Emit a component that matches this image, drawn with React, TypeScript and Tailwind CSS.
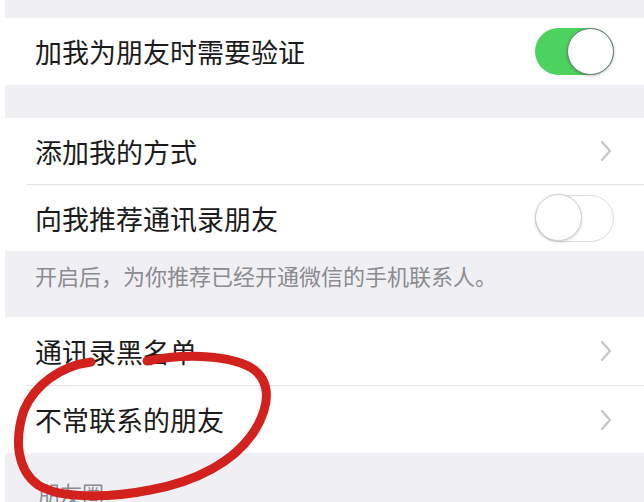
import React from "react";

const font = { fontFamily: '"Noto Sans CJK SC", "Noto Sans", sans-serif' };

function Chevron() {
  return (
    <svg width="12" height="22" viewBox="0 0 12 22" className="shrink-0">
      <path d="M2 2 L10 11 L2 20" fill="none" stroke="#c4c4c9" strokeWidth="2.2" strokeLinecap="round" strokeLinejoin="round" />
    </svg>
  );
}

function Toggle({ on }: { on: boolean }) {
  return on ? (
    <div className="relative w-[79px] h-[47px] rounded-full bg-[#4cd35f] shrink-0">
      <div className="absolute right-0 top-0 w-[47px] h-[47px] rounded-full bg-white border-[1.5px] border-[#6f7a70] shadow-[0_1px_3px_rgba(0,0,0,0.25)]" />
    </div>
  ) : (
    <div className="relative w-[79px] h-[47px] rounded-full bg-white border-[1.5px] border-[#dcdcdc] shrink-0">
      <div className="absolute left-[-1.5px] top-[-1.5px] w-[47px] h-[47px] rounded-full bg-white border-[1.5px] border-[#cfcfcf] shadow-[0_1px_3px_rgba(0,0,0,0.18)]" />
    </div>
  );
}

function Row({ label, h, right }: { label: string; h: string; right: React.ReactNode }) {
  return (
    <div className={`flex items-center justify-between bg-white pl-[30px] pr-[30px] ${h}`}>
      <span className="text-[27px] leading-none text-[#1b1b1b]">{label}</span>
      {right}
    </div>
  );
}

export default function App() {
  return (
    <div className="relative w-[644px] h-[502px] overflow-hidden bg-[#f0f0f4] border-l-[5px] border-white" style={font}>
      <div className="h-[18px]" />
      <Row label="加我为朋友时需要验证" h="h-[67px]" right={<Toggle on />} />
      <div className="h-[33px]" />
      <div className="bg-white">
        <Row label="添加我的方式" h="h-[66px]" right={<div className="pr-[2px]"><Chevron /></div>} />
        <div className="ml-[22px] h-px bg-[#e4e4e8]" />
        <Row label="向我推荐通讯录朋友" h="h-[66px]" right={<Toggle on={false} />} />
      </div>
      <div className="h-[66px] pl-[30px] pt-[13px]">
        <span className="text-[22px] leading-none text-[#8b8b90]">开启后，为你推荐已经开通微信的手机联系人。</span>
      </div>
      <div className="bg-white">
        <Row label="通讯录黑名单" h="h-[68px]" right={<div className="pr-[2px]"><Chevron /></div>} />
        <div className="ml-[22px] h-px bg-[#e4e4e8]" />
        <Row label="不常联系的朋友" h="h-[67px]" right={<div className="pr-[2px]"><Chevron /></div>} />
      </div>
      <div className="pl-[33px] pt-[28px]">
        <span className="text-[22px] leading-none text-[#8b8b90]">朋友圈</span>
      </div>
      <svg className="absolute left-[-5px] top-0 pointer-events-none" width="644" height="502" viewBox="0 0 644 502">
        <path
          d="M91,362 C60,366 35,385 24,410 C14,440 17,470 38,485 C60,499 110,498 150,490 C195,482 235,462 255,430 C270,405 272,380 250,367 C225,354 180,354 147,361"
          fill="none"
          stroke="#d3221e"
          strokeWidth="9"
          strokeLinecap="round"
        />
      </svg>
    </div>
  );
}
